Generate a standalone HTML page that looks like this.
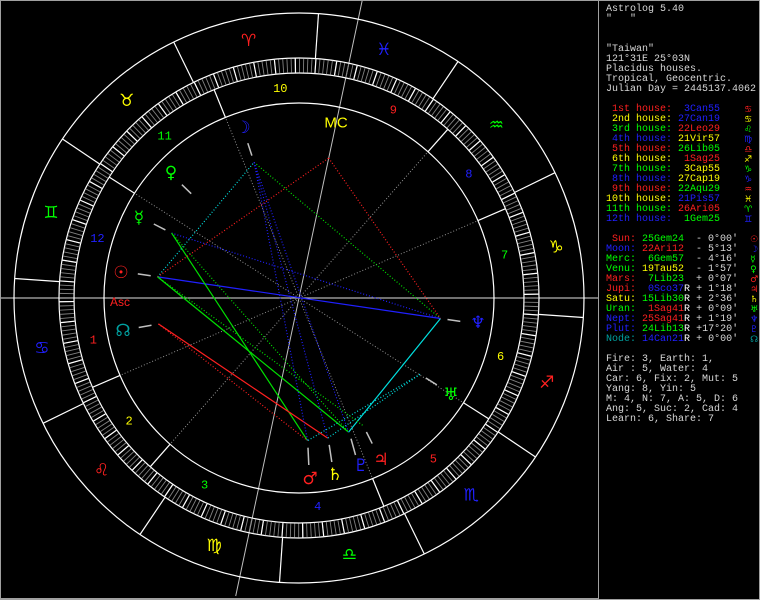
<!DOCTYPE html>
<html><head><meta charset="utf-8"><style>
html,body{margin:0;padding:0;background:#000;width:760px;height:600px;overflow:hidden}
#wrap{position:relative;width:760px;height:600px;background:#000}
svg{position:absolute;left:0;top:0}
pre{position:absolute;left:606px;top:5px;margin:0;font-family:"Liberation Mono","DejaVu Sans Mono",monospace;font-size:10px;line-height:10px;color:#d8d8d8}
pre span{line-height:10px}
.r{color:#ff2020}.y{color:#ffff00}.g{color:#00ff00}.b{color:#2020ff}.t{color:#00a0a0}.w{color:#fff}
.gl{font-family:"DejaVu Sans",sans-serif;font-size:9px;display:inline-block;height:10px;line-height:10px;vertical-align:top;overflow:hidden}
</style></head><body><div id="wrap">
<svg width="760" height="600" viewBox="0 0 760 600">
<rect x="0.5" y="0.5" width="759" height="599" fill="none" stroke="#a0a0a0"/>
<line x1="598.5" y1="0" x2="598.5" y2="600" stroke="#a0a0a0"/>
<line x1="0" y1="598.5" x2="598" y2="598.5" stroke="#a0a0a0"/>
<defs><clipPath id="c"><rect x="1" y="1" width="597" height="597"/></clipPath></defs>
<g clip-path="url(#c)">
<line x1="0" y1="298" x2="598" y2="298" stroke="#e0e0e0"/>
<line x1="362.3" y1="0" x2="235.7" y2="596" stroke="#c0c0c0"/>
<g fill="none" stroke="#fff" stroke-width="1.2">
<circle cx="299" cy="298" r="285"/>
<circle cx="299" cy="298" r="240"/>
<circle cx="299" cy="298" r="225"/>
<circle cx="299" cy="298" r="195"/>
</g>
<circle cx="299" cy="298" r="232.5" fill="none" stroke="#808080" stroke-width="14" stroke-dasharray="0.9 3.158" transform="rotate(-86.083 299 298)"/>
<circle cx="299" cy="298" r="232.5" fill="none" stroke="#fff" stroke-width="14" stroke-dasharray="1.2 19.088" transform="rotate(-86.083 299 298)"/>
<g stroke="#fff" stroke-width="1.2">
<line x1="315.4" y1="58.5" x2="318.5" y2="13.7"/>
<line x1="193.5" y1="82.5" x2="173.7" y2="42.0"/>
<line x1="99.8" y1="164.1" x2="62.5" y2="139.0"/>
<line x1="59.6" y1="281.6" x2="14.7" y2="278.5"/>
<line x1="83.5" y1="403.5" x2="43.0" y2="423.3"/>
<line x1="165.1" y1="497.2" x2="140.0" y2="534.5"/>
<line x1="282.6" y1="537.4" x2="279.5" y2="582.3"/>
<line x1="404.5" y1="513.5" x2="424.3" y2="554.0"/>
<line x1="498.2" y1="431.9" x2="535.5" y2="457.0"/>
<line x1="538.4" y1="314.4" x2="583.3" y2="317.5"/>
<line x1="514.5" y1="192.5" x2="555.0" y2="172.7"/>
<line x1="432.9" y1="98.8" x2="458.0" y2="61.5"/>
<line x1="120.0" y1="375.4" x2="92.5" y2="387.3"/>
<line x1="170.0" y1="444.3" x2="150.2" y2="466.8"/>
<line x1="372.6" y1="478.6" x2="383.9" y2="506.4"/>
<line x1="463.5" y1="402.8" x2="488.8" y2="418.9"/>
<line x1="478.0" y1="220.6" x2="505.5" y2="208.7"/>
<line x1="428.0" y1="151.7" x2="447.8" y2="129.3"/>
<line x1="225.4" y1="117.4" x2="214.1" y2="89.6"/>
<line x1="134.5" y1="193.2" x2="109.2" y2="177.1"/>
</g>
<g stroke="#909090" stroke-dasharray="1 2">
<line x1="299" y1="298" x2="120.0" y2="375.4"/>
<line x1="299" y1="298" x2="170.0" y2="444.3"/>
<line x1="299" y1="298" x2="372.6" y2="478.6"/>
<line x1="299" y1="298" x2="463.5" y2="402.8"/>
<line x1="299" y1="298" x2="478.0" y2="220.6"/>
<line x1="299" y1="298" x2="428.0" y2="151.7"/>
<line x1="299" y1="298" x2="225.4" y2="117.4"/>
<line x1="299" y1="298" x2="134.5" y2="193.2"/>
</g>
<g stroke-width="1.2">
<line x1="157.6" y1="276.9" x2="440.5" y2="318.5" stroke="#2020ff"/>
<line x1="440.5" y1="318.5" x2="348.6" y2="432.1" stroke="#00e0e0"/>
<line x1="157.6" y1="276.9" x2="348.6" y2="432.1" stroke="#00e000"/>
<line x1="171.6" y1="233.1" x2="307.6" y2="440.7" stroke="#00e000"/>
<line x1="158.4" y1="323.9" x2="327.7" y2="438.1" stroke="#ff2020"/>
</g>
<g stroke-width="1.2" stroke-dasharray="1 2">
<line x1="157.6" y1="276.9" x2="254.1" y2="162.3" stroke="#00e0e0"/>
<line x1="254.1" y1="162.3" x2="440.5" y2="318.5" stroke="#00e000"/>
<line x1="157.6" y1="276.9" x2="328.7" y2="158.1" stroke="#ff2020"/>
<line x1="328.7" y1="158.1" x2="440.5" y2="318.5" stroke="#ff2020"/>
<line x1="158.4" y1="323.9" x2="307.6" y2="440.7" stroke="#ff2020"/>
<line x1="254.1" y1="162.3" x2="327.7" y2="438.1" stroke="#2020ff"/>
<line x1="254.1" y1="162.3" x2="348.6" y2="432.1" stroke="#2020ff"/>
<line x1="254.1" y1="162.3" x2="307.6" y2="440.7" stroke="#2020ff"/>
<line x1="171.6" y1="233.1" x2="440.5" y2="318.5" stroke="#2020ff"/>
<line x1="420.0" y1="374.3" x2="307.6" y2="440.7" stroke="#00e0e0"/>
<line x1="420.0" y1="374.3" x2="327.7" y2="438.1" stroke="#00e0e0"/>
<line x1="157.6" y1="276.9" x2="363.2" y2="425.7" stroke="#00e000"/>
<line x1="171.6" y1="233.1" x2="348.6" y2="432.1" stroke="#00e000"/>
</g>
<g stroke="#c0c0c0" stroke-width="1.5">
<line x1="150.7" y1="275.8" x2="137.8" y2="273.9"/>
<line x1="251.9" y1="155.6" x2="247.8" y2="143.2"/>
<line x1="165.4" y1="229.9" x2="153.8" y2="224.0"/>
<line x1="191.2" y1="193.7" x2="181.9" y2="184.7"/>
<line x1="308.0" y1="447.7" x2="308.8" y2="465"/>
<line x1="366.4" y1="432.0" x2="372.2" y2="443.6"/>
<line x1="329.2" y1="444.9" x2="331.8" y2="462"/>
<line x1="425.9" y1="378.0" x2="436.9" y2="384.9"/>
<line x1="447.5" y1="319.5" x2="460.3" y2="321.4"/>
<line x1="351.0" y1="438.7" x2="355.5" y2="455"/>
<line x1="151.5" y1="325.2" x2="138.7" y2="327.5"/>
</g>
</g>
<g font-family="DejaVu Sans,sans-serif" font-size="17" text-anchor="middle" dominant-baseline="central">
<text x="248.6" y="41" fill="#ff2020">♈</text>
<text x="126.7" y="101" fill="#ffff00">♉</text>
<text x="51.1" y="213" fill="#00ff00">♊</text>
<text x="41.9" y="348.4" fill="#2020ff">♋</text>
<text x="101.6" y="470.3" fill="#ff2020">♌</text>
<text x="214.1" y="545.9" fill="#ffff00">♍</text>
<text x="349.4" y="555.1" fill="#00ff00">♎</text>
<text x="471.3" y="495.4" fill="#2020ff">♏</text>
<text x="546.9" y="382.9" fill="#ff2020">♐</text>
<text x="556.1" y="247.6" fill="#ffff00">♑</text>
<text x="496.4" y="125.7" fill="#00ff00">♒</text>
<text x="383.9" y="50.1" fill="#2020ff">♓</text>
</g>
<g font-family="Liberation Mono,monospace" font-size="12" text-anchor="middle" dominant-baseline="central">
<text x="93.4" y="340.6" fill="#ff2020">1</text>
<text x="129.1" y="421.4" fill="#ffff00">2</text>
<text x="204.6" y="485.6" fill="#00ff00">3</text>
<text x="317.7" y="507.2" fill="#2020ff">4</text>
<text x="433.4" y="459.3" fill="#ff2020">5</text>
<text x="500.6" y="356.8" fill="#ffff00">6</text>
<text x="504.6" y="255.4" fill="#00ff00">7</text>
<text x="468.9" y="174.6" fill="#2020ff">8</text>
<text x="393.4" y="110.4" fill="#ff2020">9</text>
<text x="280.3" y="88.8" fill="#ffff00">10</text>
<text x="164.6" y="136.7" fill="#00ff00">11</text>
<text x="97.4" y="239.2" fill="#2020ff">12</text>
</g>
<g font-family="DejaVu Sans,sans-serif" font-size="17" text-anchor="middle" dominant-baseline="central">
<text x="243" y="128" fill="#2020ff">☽</text>
<text x="171" y="173" fill="#00ff00">♀</text>
<text x="139" y="218" fill="#00ff00">☿</text>
<text x="121" y="273" fill="#ff2020">☉</text>
<text x="123" y="331" fill="#00a0a0">☊</text>
<text x="478" y="323" fill="#2020ff">♆</text>
<text x="451" y="395" fill="#00ff00">♅</text>
<text x="381" y="460" fill="#ff2020">♃</text>
<text x="361" y="466" fill="#2020ff">♇</text>
<text x="335" y="475" fill="#ffff00">♄</text>
<text x="310" y="479" fill="#ff2020">♂</text>
</g>
<g font-family="Liberation Sans Narrow,Liberation Sans,sans-serif" text-anchor="middle" dominant-baseline="central">
<text x="120" y="302" fill="#ff2020" font-size="12">Asc</text>
<text x="336" y="123" fill="#ffff00" font-size="15">MC</text>
</g>
</svg>
<pre>Astrolog 5.40
"   "


"Taiwan"
121°31E 25°03N
Placidus houses.
Tropical, Geocentric.
Julian Day = 2445137.4062

<span class="r"> 1st house:</span>  <span class="b">3Can55</span>    <span class="r gl">♋</span>
<span class="y"> 2nd house:</span> <span class="b">27Can19</span>    <span class="y gl">♋</span>
<span class="g"> 3rd house:</span> <span class="r">22Leo29</span>    <span class="g gl">♌</span>
<span class="b"> 4th house:</span> <span class="y">21Vir57</span>    <span class="b gl">♍</span>
<span class="r"> 5th house:</span> <span class="g">26Lib05</span>    <span class="r gl">♎</span>
<span class="y"> 6th house:</span>  <span class="r">1Sag25</span>    <span class="y gl">♐</span>
<span class="g"> 7th house:</span>  <span class="y">3Cap55</span>    <span class="g gl">♑</span>
<span class="b"> 8th house:</span> <span class="y">27Cap19</span>    <span class="b gl">♑</span>
<span class="r"> 9th house:</span> <span class="g">22Aqu29</span>    <span class="r gl">♒</span>
<span class="y">10th house:</span> <span class="b">21Pis57</span>    <span class="y gl">♓</span>
<span class="g">11th house:</span> <span class="r">26Ari05</span>    <span class="g gl">♈</span>
<span class="b">12th house:</span>  <span class="g">1Gem25</span>    <span class="b gl">♊</span>

<span class="r"> Sun:</span> <span class="g">25Gem24</span>  - 0°00'  <span class="r gl">☉</span>
<span class="b">Moon:</span> <span class="r">22Ari12</span>  - 5°13'  <span class="b gl">☽</span>
<span class="g">Merc:</span>  <span class="g">6Gem57</span>  - 4°16'  <span class="g gl">☿</span>
<span class="g">Venu:</span> <span class="y">19Tau52</span>  - 1°57'  <span class="g gl">♀</span>
<span class="r">Mars:</span>  <span class="g">7Lib23</span>  + 0°07'  <span class="r gl">♂</span>
<span class="r">Jupi:</span>  <span class="b">0Sco37</span><span class="w">R</span> + 1°18'  <span class="r gl">♃</span>
<span class="y">Satu:</span> <span class="g">15Lib30</span><span class="w">R</span> + 2°36'  <span class="y gl">♄</span>
<span class="g">Uran:</span>  <span class="r">1Sag41</span><span class="w">R</span> + 0°09'  <span class="g gl">♅</span>
<span class="b">Nept:</span> <span class="r">25Sag41</span><span class="w">R</span> + 1°19'  <span class="b gl">♆</span>
<span class="b">Plut:</span> <span class="g">24Lib13</span><span class="w">R</span> +17°20'  <span class="b gl">♇</span>
<span class="t">Node:</span> <span class="b">14Can21</span><span class="w">R</span> + 0°00'  <span class="t gl">☊</span>

Fire: 3, Earth: 1,
Air : 5, Water: 4
Car: 6, Fix: 2, Mut: 5
Yang: 8, Yin: 5
M: 4, N: 7, A: 5, D: 6
Ang: 5, Suc: 2, Cad: 4
Learn: 6, Share: 7</pre>
</div></body></html>
